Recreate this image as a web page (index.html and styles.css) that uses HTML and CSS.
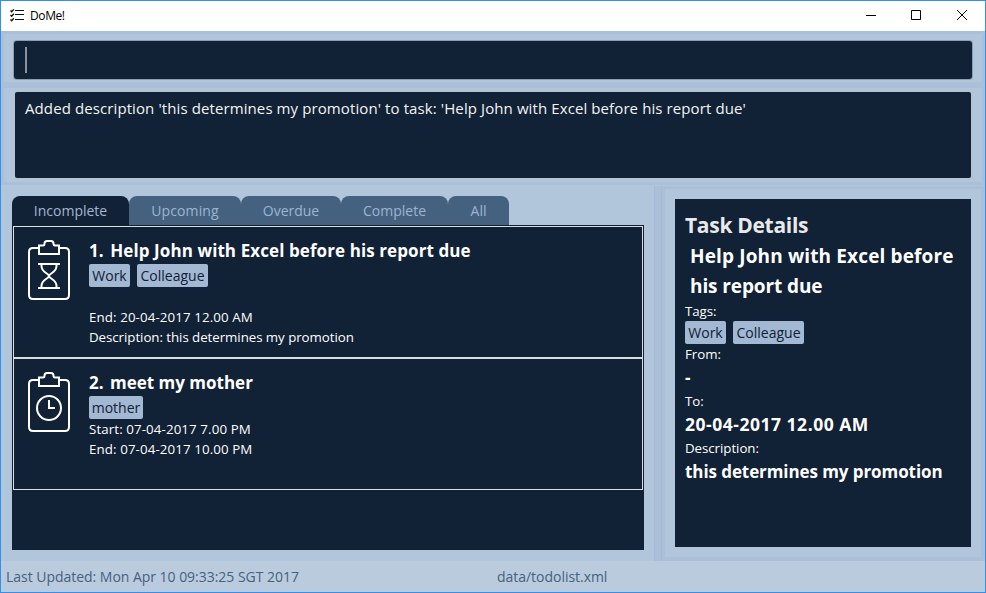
FILE: index.html
```html
<!DOCTYPE html>
<html lang="en">
<head>
<meta charset="utf-8">
<title>DoMe!</title>
<link rel="stylesheet" href="styles.css">
</head>
<body>
<div class="window">
  <header class="titlebar">
    <svg class="app-icon" width="14" height="14" viewBox="0 0 14 14" fill="none" stroke="#111"><path d="M5 1.500h9M5 5.500h9M5 10.500h9"/><path d="M.5 1.500l1.200 1.200L3.800.3M.5 6l1.200 1.200 2.100-2.400M.5 10.500l1.200 1.200 2.100-2.400" stroke-width="1.300"/></svg>
    <span class="app-name">DoMe!</span>
    <div class="controls">
      <svg width="10" height="10" viewBox="0 0 10 10" stroke="#000"><path d="M0 5.500h10"/></svg>
      <svg width="10" height="10" viewBox="0 0 10 10" stroke="#000" fill="none"><path d="M.5.5h9v9h-9z"/></svg>
      <svg width="10" height="10" viewBox="0 0 10 10" stroke="#000"><path d="M0 0l10 10M10 0L0 10"/></svg>
    </div>
  </header>
  <div class="pane command"><div class="field"><span class="caret"></span></div></div>
  <div class="pane result"><div class="display">Added description 'this determines my promotion' to task: 'Help John with Excel before his report due'</div></div>
  <main class="split">
    <section class="tasks">
      <nav class="tabs">
        <div class="tab active w1">Incomplete</div>
        <div class="tab w2">Upcoming</div>
        <div class="tab w3">Overdue</div>
        <div class="tab w4">Complete</div>
        <div class="tab w5">All</div>
      </nav>
      <div class="list">
        <article class="card">
          <svg class="clip" width="42" height="60" viewBox="0 0 42 60" fill="none" stroke="#fff" stroke-width="2"><path d="M10 8H5Q1 8 1 12v43q0 4 4 4h32q4 0 4-4V12q0-4-4-4h-5"/><path d="M11 5.500h4q1.500 0 1.500-2Q16.500 1 19 1h4q2.500 0 2.500 2.500 0 2 1.500 2h4V14H11z"/><path d="M10 24h22M10 48h22M13.500 24v2c0 7 7.500 7 7.500 10s-7.500 3-7.500 10v2M28.500 24v2c0 7-7.500 7-7.500 10s7.500 3 7.500 10v2"/></svg>
          <div class="body">
            <h2 class="wide"><span class="num">1.</span> Help John with Excel before his report due</h2>
            <div class="tags"><span class="tag work">Work</span><span class="tag colleague">Colleague</span></div>
            <p></p>
            <p class="time">End: 20-04-2017 12.00 AM</p>
            <p>Description: this determines my promotion</p>
          </div>
        </article>
        <article class="card">
          <svg class="clip" width="42" height="60" viewBox="0 0 42 60" fill="none" stroke="#fff" stroke-width="2"><path d="M10 8H5Q1 8 1 12v43q0 4 4 4h32q4 0 4-4V12q0-4-4-4h-5"/><path d="M11 5.500h4q1.500 0 1.500-2Q16.500 1 19 1h4q2.500 0 2.500 2.500 0 2 1.500 2h4V14H11z"/><circle cx="21" cy="36" r="12"/><path d="M21 28v8h6"/></svg>
          <div class="body">
            <h2><span class="num">2.</span> meet my mother</h2>
            <div class="tags"><span class="tag mother">mother</span></div>
            <p class="time">Start: 07-04-2017 7.00 PM</p>
            <p class="time">End: 07-04-2017 10.00 PM</p>
          </div>
        </article>
      </div>
    </section>
    <div class="divider"></div>
    <aside class="side">
      <div class="details">
        <h1>Task Details</h1>
        <div class="subject"><span class="wide">Help John with Excel before</span><br><span class="tight">his report due</span></div>
        <div class="label tags-label">Tags:</div>
        <div class="tags"><span class="tag work">Work</span><span class="tag colleague">Colleague</span></div>
        <div class="label">From:</div>
        <div class="value">-</div>
        <div class="label">To:</div>
        <div class="value date">20-04-2017 12.00 AM</div>
        <div class="label">Description:</div>
        <div class="value">this determines my promotion</div>
      </div>
    </aside>
  </main>
  <footer class="status"><span class="updated">Last Updated: Mon Apr 10 09:33:25 SGT 2017</span><span>data/todolist.xml</span></footer>
</div>
</body>
</html>
```
FILE: styles.css
```css
* { box-sizing: border-box; }
body { margin: 0; font-family: "Open Sans", "Noto Sans", sans-serif; white-space: nowrap; overflow: hidden; }
h1, h2, p { margin: 0; }
svg { display: block; flex: none; }
.window { width: 986px; height: 593px; border: 1px solid #308ff0; display: flex; flex-direction: column; background: #abbfd8; }
.titlebar { height: 30px; flex: none; background: #fff; display: flex; align-items: center; padding: 0 18px 2px 9px; }
.app-icon { margin-top: 2px; }
.app-name { margin-left: 6px; font-size: 12px; letter-spacing: -.4px; color: #000; }
.controls { margin-left: auto; display: flex; gap: 36px; }
.controls svg:first-child { margin-right: -1px; }
.pane { flex: none; margin: 0 3px; background: #b1c6da; }
.command { height: 48px; margin-top: 3px; padding: 7px 10px 3px 10px; }
.field { height: 38px; border-radius: 3px; background: #112136; box-shadow: 0 0 0 1px #899db5; padding: 6px 11px; }
.caret { display: block; width: 2px; height: 26px; background: #8b929e; }
.result { height: 94px; margin-top: 6px; padding: 4px 11px; }
.display { height: 86px; border-radius: 2px; background: #112136; box-shadow: 0 0 0 1px #b9c2c6, 0 1px 0 #d0d0cf; color: #f4f4f4; font-size: 15px; letter-spacing: .1px; line-height: 22px; padding: 5px 10px; }
.split { flex: none; height: 376px; margin-top: 3px; display: flex; background: #b1c6da; }
.tasks { width: 653px; padding: 11px 10px 0 11px; }
.tabs { display: flex; height: 29px; }
.tab { height: 29px; border-radius: 8px 8px 0 0; background: #446280; color: #9cb4d0; font-size: 14px; line-height: 29px; text-align: center; }
.tab.active { background: #112136; color: #a3b7d0; }
.w1 { width: 117px; }
.w2 { width: 112px; letter-spacing: .1px; }
.w3 { width: 100px; }
.w4 { width: 107px; }
.w5 { width: 61px; }
.list { height: 325px; background: #112136; padding: 1px; }
.card { height: 132px; border: 1px solid #dcdcdc; display: flex; padding: 12px 14px 0; color: #fff; }
.clip { margin-top: 1px; }
.body { margin-left: 19px; }
.card h2 { font-size: 17px; line-height: 23px; height: 25px; }
.card h2.wide { letter-spacing: .09px; }
.num { margin-right: 2px; }
.tags { display: flex; gap: 7px; height: 23px; }
.tag { height: 23px; line-height: 24px; border-radius: 2px; background: #a3b8d2; color: #112136; font-size: 14px; text-align: center; }
.work { width: 41px; }
.colleague { width: 71px; }
.mother { width: 54px; }
.card p { font-size: 13.300px; line-height: 20px; height: 20px; letter-spacing: -.05px; }
.card p.time { letter-spacing: .11px; }
.divider { width: 8px; background: #abbfd8; border: solid #a5bad4; border-width: 0 1px; margin-top: 1px; }
.side { width: 323px; margin-top: 1px; padding: 3px 4px 4px 3px; background: #abbfd8; }
.details { height: 368px; border: 10px solid #b1c6da; background: #112136; color: #fff; padding: 12px 10px 0; }
.details h1 { font-size: 21px; line-height: 29px; height: 30px; font-weight: 700; letter-spacing: -.3px; color: #e9e9e9; }
.subject { padding-left: 5px; font-size: 19px; line-height: 30px; height: 60px; font-weight: 700; }
.subject .wide { letter-spacing: .14px; }
.subject .tight { letter-spacing: -.1px; }
.label { font-size: 13.300px; line-height: 21px; height: 21px; letter-spacing: -.05px; }
.tags-label { height: 20px; }
.value { font-size: 17px; line-height: 26px; height: 26px; font-weight: 700; letter-spacing: -.08px; }
.value.date { font-size: 17.500px; line-height: 24px; letter-spacing: .52px; }
.status { flex: 1; background: #bbcbde; color: #446280; font-size: 14px; letter-spacing: -.03px; line-height: 31px; display: flex; padding-left: 5px; }
.updated { width: 491px; }
```
